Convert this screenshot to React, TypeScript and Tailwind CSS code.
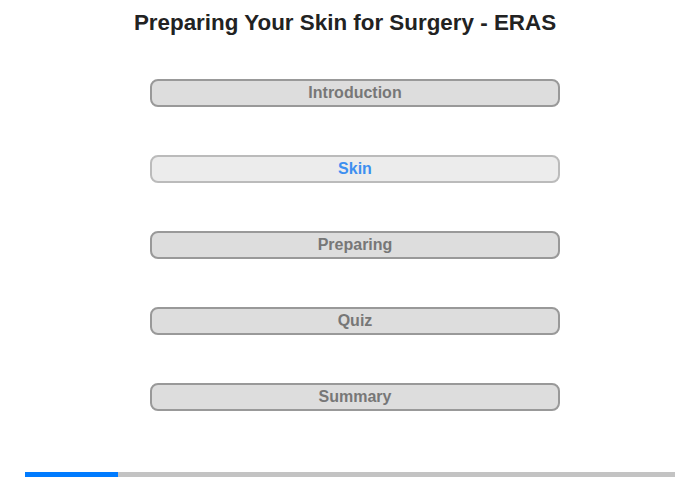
export default function App() {
  const items = ['Introduction', 'Skin', 'Preparing', 'Quiz', 'Summary']
  const active = 'Skin'

  return (
    <div className="w-[700px] h-[480px] bg-white flex flex-col font-['Liberation_Sans',Arial,sans-serif]">
      <h1 className="pr-[10px] pt-[10px] h-[79px] text-center text-[22.4px] leading-[26px] font-bold text-[#222]">
        Preparing Your Skin for Surgery - ERAS
      </h1>

      <div className="flex flex-col gap-[48px] pl-[150px]">
        {items.map((item) => (
          <button
            key={item}
            className={
              item === active
                ? 'w-[410px] h-[28px] rounded-[8px] border-2 border-[#bbb] bg-[#ececec] text-[16px] font-bold text-[#3d8ff0]'
                : 'w-[410px] h-[28px] rounded-[8px] border-2 border-[#999] bg-[#dddddd] text-[16px] font-bold text-[#777]'
            }
          >
            {item}
          </button>
        ))}
      </div>

      {/* progress */}
      <div className="mt-[61px] mx-[25px] h-[5px] bg-[#c3c3c3] flex">
        <div className="w-[93px] bg-[#007bff]" />
      </div>
    </div>
  )
}
